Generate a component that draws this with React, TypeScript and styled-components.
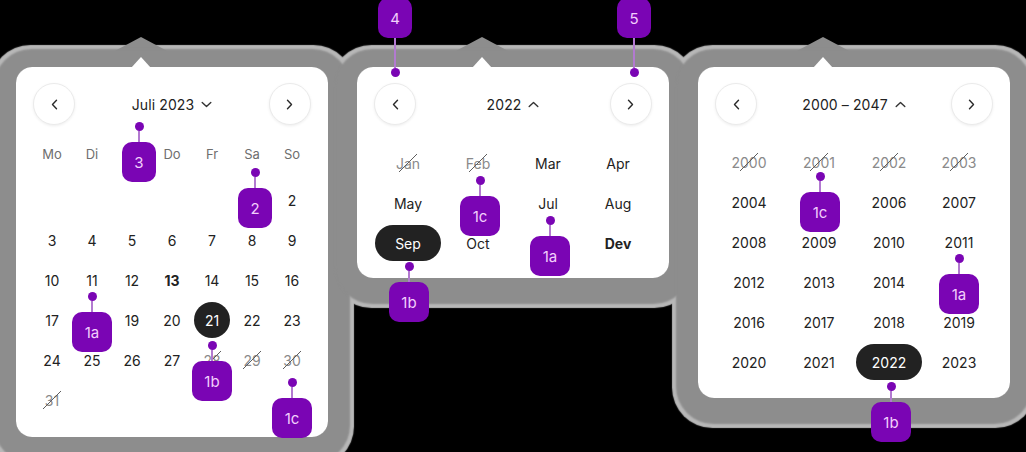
import React from "react";
import styled, { createGlobalStyle, css } from "styled-components";

const GlobalStyle = createGlobalStyle`
  html, body { margin: 0; padding: 0; background: #000; }
  body { font-family: Inter, "Noto Sans", "Liberation Sans", sans-serif; }
  * { box-sizing: border-box; }
`;

const Stage = styled.div`
  position: relative;
  width: 1026px;
  height: 452px;
  overflow: hidden;
  background: #000;
`;

const PanelRow = styled.div`
  display: flex;
  align-items: flex-start;
  gap: 29px;
  padding: 67px 0 0 16px;
  isolation: isolate;
`;

const Panel = styled.div<{ $pb: number }>`
  position: relative;
  width: 312px;
  padding: 16px 16px ${(p) => p.$pb}px;
  background: #fff;
  border-radius: 16px;
  &::before {
    content: "";
    position: absolute;
    inset: 0;
    border-radius: 16px;
    box-shadow: 0 4px 1px 26px #b8b8b8;
    z-index: -2;
  }
  &::after {
    content: "";
    position: absolute;
    inset: 0;
    border-radius: 16px;
    box-shadow: 0 4px 2px 22px #8d8d8d;
    z-index: -1;
  }
`;

const Notch = styled.div`
  position: absolute;
  top: -10px;
  left: 115px;
  width: 20px;
  height: 11px;
  background: #fff;
  clip-path: polygon(50% 0, 100% 100%, 0 100%);
`;

const NotchGlow = styled.div`
  position: absolute;
  top: -30px;
  left: 95px;
  width: 60px;
  height: 16px;
  background: #8d8d8d;
  clip-path: polygon(50% 0, 100% 100%, 0 100%);
  z-index: -1;
`;

const Header = styled.div`
  display: flex;
  align-items: center;
  justify-content: space-between;
  height: 42px;
  margin: 0 1px;
`;

const NavButton = styled.button`
  width: 42px;
  height: 42px;
  border-radius: 50%;
  border: 1px solid #ebebeb;
  background: #fff;
  box-shadow: 0 1px 3px rgba(0, 0, 0, 0.07);
  display: flex;
  align-items: center;
  justify-content: center;
  padding: 0;
  color: #2a2a2a;
`;

const Title = styled.div`
  display: flex;
  align-items: center;
  gap: 7px;
  font-size: 14px;
  color: #222;
  letter-spacing: 0.1px;
`;

const WeekRow = styled.div`
  display: grid;
  grid-template-columns: repeat(7, 40px);
  height: 32px;
  margin-top: 13px;
  align-items: center;
  justify-items: center;
  font-size: 13px;
  color: #6e6e6e;
`;

const Grid = styled.div<{ $cols: number; $colW: number; $mt: number }>`
  display: grid;
  grid-template-columns: repeat(${(p) => p.$cols}, ${(p) => p.$colW}px);
  grid-auto-rows: 40px;
  margin-top: ${(p) => p.$mt}px;
`;

const Cell = styled.div`
  display: flex;
  align-items: center;
  justify-content: center;
`;

const Label = styled.span<{
  $shape: "circle" | "pill";
  $selected?: boolean;
  $bold?: boolean;
  $disabled?: boolean;
}>`
  position: relative;
  display: flex;
  align-items: center;
  justify-content: center;
  height: 36px;
  width: ${(p) => (p.$shape === "circle" ? "36px" : "66px")};
  border-radius: 18px;
  font-size: 14px;
  color: #222;
  font-weight: ${(p) => (p.$bold ? 700 : 400)};
  ${(p) =>
    p.$selected &&
    css`
      background: #222;
      color: #fff;
    `}
  ${(p) =>
    p.$disabled &&
    css`
      color: #8a8a8a;
      &::after {
        content: "";
        position: absolute;
        left: 50%;
        top: 50%;
        width: 18px;
        height: 18px;
        transform: translate(-50%, -50%);
        background: linear-gradient(
          to bottom right,
          transparent calc(50% - 0.7px),
          #5e5e5e calc(50% - 0.7px),
          #5e5e5e calc(50% + 0.7px),
          transparent calc(50% + 0.7px)
        );
      }
    `}
`;

const MarkerWrap = styled.div<{ $x: number; $y: number; $w: number }>`
  position: absolute;
  left: ${(p) => p.$x - p.$w / 2}px;
  top: ${(p) => p.$y}px;
  width: ${(p) => p.$w}px;
  display: flex;
  flex-direction: column;
  align-items: center;
  z-index: 10;
`;

const Dot = styled.div`
  width: 9px;
  height: 9px;
  border-radius: 50%;
  background: #7a05b4;
  flex: none;
`;

const Stem = styled.div<{ $h: number }>`
  width: 2px;
  height: ${(p) => p.$h}px;
  background: #b27ad0;
  flex: none;
`;

const Tag = styled.div<{ $w: number }>`
  width: ${(p) => p.$w}px;
  height: 40px;
  border-radius: 10px;
  background: #7a05b4;
  color: #f2cffc;
  font-size: 15px;
  display: flex;
  align-items: center;
  justify-content: center;
  flex: none;
`;

const ChevronLeft = () => (
  <svg width="7" height="11" viewBox="0 0 7 11" fill="none">
    <path d="M5.5 1.2L1.5 5.5l4 4.3" stroke="currentColor" strokeWidth="1.4" strokeLinecap="round" strokeLinejoin="round" />
  </svg>
);
const ChevronRight = () => (
  <svg width="7" height="11" viewBox="0 0 7 11" fill="none">
    <path d="M1.5 1.2l4 4.3-4 4.3" stroke="currentColor" strokeWidth="1.4" strokeLinecap="round" strokeLinejoin="round" />
  </svg>
);
const ChevronDown = () => (
  <svg width="11" height="7" viewBox="0 0 11 7" fill="none">
    <path d="M1.2 1.5l4.3 4 4.3-4" stroke="#333" strokeWidth="1.4" strokeLinecap="round" strokeLinejoin="round" />
  </svg>
);
const ChevronUp = () => (
  <svg width="11" height="7" viewBox="0 0 11 7" fill="none">
    <path d="M1.2 5.5l4.3-4 4.3 4" stroke="#333" strokeWidth="1.4" strokeLinecap="round" strokeLinejoin="round" />
  </svg>
);

const PanelHeader: React.FC<{ title: string; up?: boolean }> = ({ title, up }) => (
  <Header>
    <NavButton aria-label="previous">
      <ChevronLeft />
    </NavButton>
    <Title>
      {title}
      {up ? <ChevronUp /> : <ChevronDown />}
    </Title>
    <NavButton aria-label="next">
      <ChevronRight />
    </NavButton>
  </Header>
);

type MarkerProps = { x: number; y: number; label: string; down?: boolean };
const Marker: React.FC<MarkerProps> = ({ x, y, label, down }) => {
  const w = label.length > 1 ? 40 : 34;
  if (down) {
    return (
      <MarkerWrap $x={x} $y={-2} $w={w}>
        <Tag $w={w}>{label}</Tag>
        <Stem $h={y - 4 - 38} />
        <Dot />
      </MarkerWrap>
    );
  }
  return (
    <MarkerWrap $x={x} $y={y - 4} $w={w}>
      <Dot />
      <Stem $h={11} />
      <Tag $w={w}>{label}</Tag>
    </MarkerWrap>
  );
};

/* Cells whose labels sit fully under an annotation marker are left blank. */
const weekdays = ["Mo", "Di", "", "Do", "Fr", "Sa", "So"];
const days: (number | null)[] = [null, null, null, null, null, ...Array.from({ length: 31 }, (_, i) => i + 1)];
const hiddenDays = [1, 18];
const months = ["Jan", "Feb", "Mar", "Apr", "May", "", "Jul", "Aug", "Sep", "Oct", "", "Dev"];
const years = Array.from({ length: 24 }, (_, i) => 2000 + i);
const hiddenYears = [2005, 2015];

const markers: MarkerProps[] = [
  { x: 139, y: 126, label: "3" },
  { x: 255, y: 172, label: "2" },
  { x: 92, y: 296, label: "1a" },
  { x: 212, y: 345, label: "1b" },
  { x: 292, y: 382, label: "1c" },
  { x: 395, y: 72, label: "4", down: true },
  { x: 634, y: 72, label: "5", down: true },
  { x: 480, y: 180, label: "1c" },
  { x: 550, y: 220, label: "1a" },
  { x: 409, y: 266, label: "1b" },
  { x: 820, y: 176, label: "1c" },
  { x: 959, y: 258, label: "1a" },
  { x: 891, y: 386, label: "1b" },
];

export default function App() {
  return (
    <>
      <GlobalStyle />
      <Stage>
        <PanelRow>
          <Panel $pb={17}>
            <NotchGlow />
            <Notch />
            <PanelHeader title="Juli 2023" />
            <WeekRow>
              {weekdays.map((d, i) => (
                <span key={i}>{d}</span>
              ))}
            </WeekRow>
            <Grid $cols={7} $colW={40} $mt={10}>
              {days.map((d, i) => (
                <Cell key={i}>
                  {d !== null && !hiddenDays.includes(d) && (
                    <Label $shape="circle" $bold={d === 13} $selected={d === 21} $disabled={d >= 28}>
                      {d}
                    </Label>
                  )}
                </Cell>
              ))}
            </Grid>
          </Panel>

          <Panel $pb={15}>
            <NotchGlow />
            <Notch />
            <PanelHeader title="2022" up />
            <Grid $cols={4} $colW={70} $mt={18}>
              {months.map((m, i) => (
                <Cell key={i}>
                  {m && (
                    <Label $shape="pill" $disabled={i < 2} $selected={m === "Sep"} $bold={m === "Dev"}>
                      {m}
                    </Label>
                  )}
                </Cell>
              ))}
            </Grid>
          </Panel>

          <Panel $pb={16}>
            <NotchGlow />
            <Notch />
            <PanelHeader title="2000 – 2047" up />
            <Grid $cols={4} $colW={70} $mt={17}>
              {years.map((y) => (
                <Cell key={y}>
                  {!hiddenYears.includes(y) && (
                    <Label $shape="pill" $disabled={y < 2004} $selected={y === 2022}>
                      {y}
                    </Label>
                  )}
                </Cell>
              ))}
            </Grid>
          </Panel>
        </PanelRow>
        {markers.map((m, i) => (
          <Marker key={i} {...m} />
        ))}
      </Stage>
    </>
  );
}
